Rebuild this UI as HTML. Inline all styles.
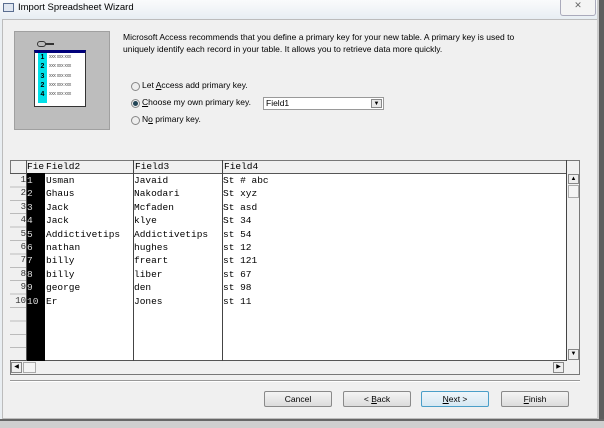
<!DOCTYPE html>
<html><head><style>
*{margin:0;padding:0;box-sizing:border-box}
body{width:604px;height:428px;overflow:hidden;background:#e9eef2;font-family:"Liberation Sans",sans-serif;font-size:8.5px;color:#000;position:relative}
.abs{position:absolute}
.mono{font-family:"Liberation Mono",monospace;font-size:9.5px}
.btn{position:absolute;top:391px;height:16px;width:68px;border:1px solid #8a8a8a;border-radius:2px;background:linear-gradient(#f4f4f4,#dcdcdc);text-align:center;line-height:14px;font-size:8.5px}
.radio{position:absolute;left:131px;width:9px;height:9px;border-radius:50%;border:1px solid #888;background:#eee}
</style></head><body>
<div class="abs" style="left:0;top:0;width:604px;height:19px;background:linear-gradient(#fafbfc,#e8eef3)"></div>
<div class="abs" style="left:3px;top:3px;width:11px;height:9px;border:1px solid #5a6e90;background:#dfe6f0"></div>
<div class="abs" style="left:18px;top:2px;font-size:9.5px">Import Spreadsheet Wizard</div>
<div class="abs" style="left:560px;top:0;width:36px;height:16px;border:1px solid #aab;border-top:none;border-radius:0 0 3px 3px;background:#f4f4f4;text-align:center;font-size:9px;color:#666">✕</div>
<div class="abs" style="left:2px;top:19px;width:596px;height:400px;background:#f0f0f0;border:1px solid #bcbcbc"></div>
<div class="abs" style="left:597px;top:0;width:7px;height:428px;background:#5e5e5e;border-left:2px solid #ccc"></div>
<div class="abs" style="left:0;top:419px;width:604px;height:9px;background:#cfcfcf;border-top:2px solid #666"></div>
<!-- icon -->
<div class="abs" style="left:14px;top:31px;width:96px;height:99px;background:#bdbdbd;border:1px solid #a0a0a0"></div>
<div class="abs" style="left:34px;top:50px;width:52px;height:57px;background:#fff;border:1px solid #333;border-top:3px solid #00007a"></div>
<div class="abs" style="left:38px;top:53px;width:9px;height:50px;background:#00e0e8"></div>
<div class="abs" style="left:38px;top:53px;font-size:7px;font-weight:bold;line-height:9.3px;width:9px;text-align:center">1<br>2<br>3<br>2<br>4</div>
<div class="abs" style="left:49px;top:53px;font-size:5px;line-height:9.3px;color:#555;letter-spacing:-0.3px">xxx xxx xxx<br>xxx xxx xxx<br>xxx xxx xxx<br>xxx xxx xxx<br>xxx xxx xxx</div>
<div class="abs" style="left:37px;top:41px;width:9px;height:6px;border:1px solid #333;border-radius:3px"></div>
<div class="abs" style="left:45px;top:43px;width:9px;height:2px;background:#333"></div>
<div class="abs" style="left:123px;top:32px;line-height:11.5px">Microsoft Access recommends that you define a primary key for your new table. A primary key is used to<br>uniquely identify each record in your table. It allows you to retrieve data more quickly.</div>
<div class="radio" style="top:82px"></div>
<div class="abs" style="left:142px;top:80px">Let <u>A</u>ccess add primary key.</div>
<div class="radio" style="top:99px"><div style="width:5px;height:5px;margin:1px;border-radius:50%;background:#245"></div></div>
<div class="abs" style="left:142px;top:97px"><u>C</u>hoose my own primary key.</div>
<div class="radio" style="top:116px"></div>
<div class="abs" style="left:142px;top:114px">N<u>o</u> primary key.</div>
<div class="abs" style="left:263px;top:97px;width:121px;height:13px;background:#fff;border:1px solid #999;padding-left:2px;line-height:11px">Field1</div>
<div class="abs" style="left:371px;top:99px;width:11px;height:9px;border:1px solid #888;background:#e8e8e8;font-size:6px;text-align:center;line-height:8px">▼</div>
<!-- grid -->
<div class="abs" style="left:10px;top:160px;width:570px;height:215px;background:#f0f0f0;border:1px solid #777"></div>
<div class="abs" style="left:10px;top:173px;width:557px;height:188px;background:#fff;border-top:1px solid #555;border-bottom:1px solid #555"></div>
<div class="abs" style="left:10px;top:174px;width:16px;height:186px;background:repeating-linear-gradient(#f0f0f0 0 12.4px,#bbb 12.4px 13.4px)"></div>
<div class="abs" style="left:26px;top:173px;width:19px;height:188px;background:#000"></div>
<div class="abs" style="left:26px;top:160px;width:1px;height:201px;background:#555"></div>
<div class="abs" style="left:133px;top:160px;width:1px;height:201px;background:#444"></div>
<div class="abs" style="left:222px;top:160px;width:1px;height:201px;background:#444"></div>
<div class="abs" style="left:566px;top:160px;width:1px;height:201px;background:#444"></div>
<div class="abs mono" style="left:27px;top:161px">Fie</div>
<div class="abs mono" style="left:46px;top:161px">Field2</div>
<div class="abs mono" style="left:135px;top:161px">Field3</div>
<div class="abs mono" style="left:224px;top:161px">Field4</div>
<div class="abs mono" style="left:10px;top:174px;width:16px;line-height:13.4px;text-align:right;font-size:9px;color:#333">1<br>2<br>3<br>4<br>5<br>6<br>7<br>8<br>9<br>10</div>
<div class="abs mono" style="left:27px;top:174px;line-height:13.4px;color:#ddd">1<br>2<br>3<br>4<br>5<br>6<br>7<br>8<br>9<br>10</div>
<div class="abs mono" style="left:46px;top:174px;line-height:13.4px">Usman<br>Ghaus<br>Jack<br>Jack<br>Addictivetips<br>nathan<br>billy<br>billy<br>george<br>Er</div>
<div class="abs mono" style="left:134px;top:174px;line-height:13.4px">Javaid<br>Nakodari<br>Mcfaden<br>klye<br>Addictivetips<br>hughes<br>freart<br>liber<br>den<br>Jones</div>
<div class="abs mono" style="left:223px;top:174px;line-height:13.4px;white-space:pre">St # abc
St xyz
St asd
St 34
st 54
st 12
st 121
st 67
st 98
st 11</div>
<div class="abs" style="left:568px;top:174px;width:11px;height:10px;border:1px solid #888;background:#eee;font-size:6px;text-align:center;line-height:8px">▲</div>
<div class="abs" style="left:568px;top:185px;width:11px;height:13px;border:1px solid #aaa;background:#f4f4f4"></div>
<div class="abs" style="left:568px;top:349px;width:11px;height:11px;border:1px solid #888;background:#eee;font-size:6px;text-align:center;line-height:9px">▼</div>
<div class="abs" style="left:11px;top:362px;width:11px;height:11px;border:1px solid #888;background:#eee;font-size:6px;text-align:center;line-height:9px">◀</div>
<div class="abs" style="left:23px;top:362px;width:13px;height:11px;border:1px solid #aaa;background:#f4f4f4"></div>
<div class="abs" style="left:553px;top:362px;width:11px;height:11px;border:1px solid #888;background:#eee;font-size:6px;text-align:center;line-height:9px">▶</div>
<div class="abs" style="left:10px;top:380px;width:570px;height:2px;border-top:1px solid #999;border-bottom:1px solid #fff"></div>
<div class="btn" style="left:264px">Cancel</div>
<div class="btn" style="left:343px">&lt; <u>B</u>ack</div>
<div class="btn" style="left:421px;border-color:#4a9ec8;background:linear-gradient(#eef6fb,#d6e8f2)"><u>N</u>ext &gt;</div>
<div class="btn" style="left:501px"><u>F</u>inish</div>
</body></html>
